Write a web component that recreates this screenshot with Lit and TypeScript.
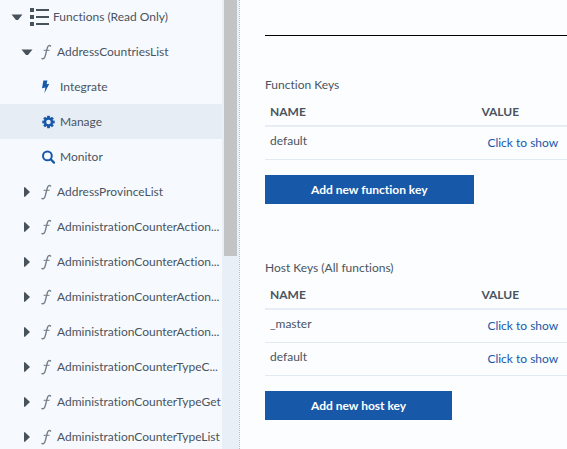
import { LitElement, html, css, svg, nothing } from "lit";
import { customElement, property } from "lit/decorators.js";
import { classMap } from "lit/directives/class-map.js";

interface KeyRow {
  name: string;
}

const openArrow = html`<svg class="arrow" width="12" height="12" viewBox="0 0 12 12" aria-hidden="true">
  <path d="M0.5 3.5h11L7 9H5z" fill="#47525b" />
</svg>`;

const closedArrow = html`<svg class="arrow" width="12" height="12" viewBox="0 0 12 12" aria-hidden="true">
  <path d="M3 1.2h1l5 4.8l-5 4.8H3z" fill="#47525b" />
</svg>`;

const listIcon = html`<svg width="19" height="18" viewBox="0 0 19 18" aria-hidden="true">
  <path d="M0 0h4v4H0zM0 7h4v4H0zM0 14h4v4H0zM6 1h13v2H6zM6 8h13v2H6zM6 15h13v2H6z" fill="#47525b" />
</svg>`;

const functionIcon = html`<svg width="11" height="16" viewBox="0 0 11 16" aria-hidden="true">
  <g fill="none" stroke="#737d88" stroke-linecap="round">
    <path d="M9.6 2C8.6 1 7 1.3 6.4 3.6L4.3 11.6C3.7 14.2 2.5 15.3 1 14.6" stroke-width="1.4" />
    <path d="M3 6.3h5.2" stroke-width="1" />
  </g>
</svg>`;

const boltIcon = html`<svg width="13" height="14" viewBox="0 0 13 14" aria-hidden="true">
  <path d="M1.4 0.5h4L4.6 4.2L7.3 3.7L2.4 13.2L3.4 7.6L0 8.2z" fill="#1858a9" />
</svg>`;

const teeth = [0, 45, 90, 135, 180, 225, 270, 315];
const gearIcon = html`<svg width="13" height="14" viewBox="-6.5 -7 13 14" aria-hidden="true">
  <circle r="3.5" fill="none" stroke="#1858a9" stroke-width="2.4" />
  ${teeth.map((a) => svg`<rect x="-1.4" y="-6.2" width="2.8" height="2.4" fill="#1858a9" transform="rotate(${a})" />`)}
</svg>`;

const searchIcon = html`<svg width="13" height="14" viewBox="0 0 13 14" aria-hidden="true">
  <circle cx="5.4" cy="5.9" r="4.4" fill="none" stroke="#1858a9" stroke-width="2" />
  <path d="M8.8 9.4L12 12.6" stroke="#1858a9" stroke-width="2.2" stroke-linecap="round" />
</svg>`;

const actions = [
  { label: "Integrate", icon: boltIcon },
  { label: "Manage", icon: gearIcon },
  { label: "Monitor", icon: searchIcon },
];

const functions = [
  "AddressProvinceList",
  "AdministrationCounterAction...",
  "AdministrationCounterAction...",
  "AdministrationCounterAction...",
  "AdministrationCounterAction...",
  "AdministrationCounterTypeC...",
  "AdministrationCounterTypeGet",
  "AdministrationCounterTypeList",
];

@customElement("function-tree")
export class FunctionTree extends LitElement {
  static styles = css`
    :host {
      display: flex;
      height: 100%;
      overflow: hidden;
      background: #f6fafe;
      border-right: 1px dotted #b4bac2;
      box-sizing: border-box;
    }
    .list {
      flex: 1;
      min-width: 0;
      margin: -1px 0 0;
      padding: 0;
      list-style: none;
    }
    .item {
      display: flex;
      align-items: center;
      width: 100%;
      height: 35px;
      padding: 0 0 0 21px;
      border: 0;
      background: none;
      color: #4a545e;
      font: inherit;
      font-variant-ligatures: none;
      text-align: left;
      cursor: pointer;
    }
    .item svg {
      flex: none;
    }
    .root {
      padding-left: 11px;
    }
    .action {
      padding-left: 42px;
    }
    .selected {
      background: #e6edf5;
    }
    .arrow {
      margin-right: 8px;
    }
    .label {
      min-width: 0;
      margin-left: 5px;
      white-space: nowrap;
    }
    .root .label {
      margin-left: 4px;
    }
    .root .arrow {
      margin-right: 7px;
    }
    .track {
      flex: none;
      width: 17px;
      padding: 0 2px;
      box-sizing: border-box;
      background: #e8eff7;
    }
    .thumb {
      height: 57%;
      background: #c2c3c5;
    }
  `;

  @property() selected = "Manage";

  private pick(label: string) {
    this.selected = label;
  }

  render() {
    return html`
      <ul class="list">
        <li><button class="item root" aria-expanded="true">${openArrow}${listIcon}<span class="label">Functions (Read Only)</span></button></li>
        <li><button class="item" aria-expanded="true">${openArrow}${functionIcon}<span class="label">AddressCountriesList</span></button></li>
        ${actions.map(
          (a) => html`<li>
            <button
              class=${classMap({ item: true, action: true, selected: a.label === this.selected })}
              aria-current=${a.label === this.selected ? "page" : nothing}
              @click=${() => this.pick(a.label)}
            >${a.icon}<span class="label">${a.label}</span></button>
          </li>`
        )}
        ${functions.map(
          (name) => html`<li><button class="item" aria-expanded="false">${closedArrow}${functionIcon}<span class="label">${name}</span></button></li>`
        )}
      </ul>
      <div class="track"><div class="thumb"></div></div>
    `;
  }
}

@customElement("key-section")
export class KeySection extends LitElement {
  static styles = css`
    :host {
      display: block;
      font-variant-ligatures: none;
    }
    .keys {
      width: 100%;
      border-collapse: separate;
      border-spacing: 0;
      table-layout: fixed;
    }
    .caption {
      height: 20px;
      line-height: 20px;
      text-align: left;
    }
    .head,
    .cell {
      padding: 0 5px;
      text-align: left;
      white-space: nowrap;
      box-sizing: border-box;
    }
    .head {
      height: 32px;
      padding-top: 4px;
      border-bottom: 2px solid #e6edf5;
      font-weight: 700;
    }
    .name {
      width: 70%;
    }
    .cell {
      height: 33px;
      padding-bottom: 4px;
      border-bottom: 1px solid #e1eaf3;
    }
    .value {
      padding: 0 5px;
    }
    .show {
      padding: 0 6px;
      border: 0;
      background: none;
      color: #1858a9;
      font: inherit;
      cursor: pointer;
    }
    .add {
      height: 29px;
      margin-top: 15px;
      padding: 0 46px;
      border: 0;
      background: #1858a9;
      color: #fff;
      font: inherit;
      font-weight: 700;
      cursor: pointer;
    }
  `;

  @property() heading = "";
  @property() action = "";
  @property({ attribute: false }) rows: KeyRow[] = [];

  render() {
    return html`
      <table class="keys">
        <caption class="caption">${this.heading}</caption>
        <thead>
          <tr><th class="head name" scope="col">NAME</th><th class="head" scope="col">VALUE</th></tr>
        </thead>
        <tbody>
          ${this.rows.map(
            (r) => html`<tr>
              <td class="cell">${r.name}</td>
              <td class="cell value"><button class="show">Click to show</button></td>
            </tr>`
          )}
        </tbody>
      </table>
      <button class="add">${this.action}</button>
    `;
  }
}

@customElement("app-root")
export class AppRoot extends LitElement {
  static styles = css`
    :host {
      display: grid;
      grid-template-columns: 240px minmax(0, 1fr);
      height: 100vh;
      overflow: hidden;
      background: #fcfdff;
      color: #4a545e;
      font: 12px/18px Lato, "Open Sans", sans-serif;
    }
    .content {
      display: flex;
      flex-direction: column;
      gap: 54px;
      padding-left: 25px;
    }
    .rule {
      width: 100%;
      height: 35px;
      margin: 0 0 -15px;
      border: 0;
      border-bottom: 1px solid #000;
    }
  `;

  render() {
    return html`
      <function-tree></function-tree>
      <main class="content">
        <hr class="rule" />
        <key-section heading="Function Keys" action="Add new function key" .rows=${[{ name: "default" }]}></key-section>
        <key-section
          heading="Host Keys (All functions)"
          action="Add new host key"
          .rows=${[{ name: "_master" }, { name: "default" }]}
        ></key-section>
      </main>
    `;
  }
}
